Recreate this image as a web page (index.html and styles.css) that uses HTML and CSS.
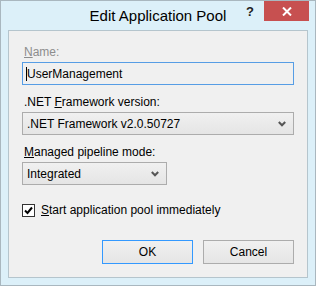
FILE: index.html
```html
<!DOCTYPE html>
<html lang="en">
<head>
    <meta charset="UTF-8">
    <title>Edit Application Pool</title>
    <link rel="stylesheet" href="styles.css">
</head>
<body>
    <div class="window">
        <div class="title-bar">
            <span class="title">Edit Application Pool</span>
            <span class="help-btn">?</span>
            <span class="close-btn">
                <svg width="10" height="9" viewBox="0 0 10 9"><path d="M1 0.5 L9 8.5 M9 0.5 L1 8.5" stroke="#fff" stroke-width="2"/></svg>
            </span>
        </div>
        <div class="panel">
            <label class="field-label disabled"><u>N</u>ame:</label>
            <div class="text-box"><span class="caret"></span>UserManagement</div>

            <label class="field-label">.NET <u>F</u>ramework version:</label>
            <div class="combo wide">
                <span>.NET Framework v2.0.50727</span>
                <svg class="chevron" width="8" height="6" viewBox="0 0 8 6"><path d="M0.8 1 L4 4.3 L7.2 1" fill="none" stroke="#555" stroke-width="2"/></svg>
            </div>

            <label class="field-label"><u>M</u>anaged pipeline mode:</label>
            <div class="combo narrow">
                <span>Integrated</span>
                <svg class="chevron" width="8" height="6" viewBox="0 0 8 6"><path d="M0.8 1 L4 4.3 L7.2 1" fill="none" stroke="#555" stroke-width="2"/></svg>
            </div>

            <div class="check-row">
                <span class="check-box">
                    <svg width="11" height="11" viewBox="0 0 11 11"><path d="M2 5.5 L4.5 8 L9 2.5" fill="none" stroke="#000" stroke-width="2"/></svg>
                </span>
                <span><u>S</u>tart application pool immediately</span>
            </div>

            <div class="button-row">
                <button class="btn default">OK</button>
                <button class="btn">Cancel</button>
            </div>
        </div>
    </div>
</body>
</html>
```

FILE: styles.css
```css
body {
    margin: 0;
    font-family: "Liberation Sans", Arial, sans-serif;
    font-size: 12px;
    color: #000;
}
.window {
    width: 316px;
    height: 286px;
    box-sizing: border-box;
    border: 1px solid #a9b7bf;
    background: #dcf0f9;
    display: flex;
    flex-direction: column;
}
.title-bar {
    height: 29px;
    display: flex;
    align-items: flex-start;
    justify-content: center;
    position: relative;
}
.title {
    font-size: 15px;
    margin-top: 6px;
}
.help-btn {
    position: absolute;
    left: 245px;
    top: 3px;
    font-weight: bold;
    font-size: 13px;
    color: #222;
}
.close-btn {
    position: absolute;
    left: 263px;
    top: 0;
    width: 45px;
    height: 20px;
    background: #c75050;
    display: flex;
    align-items: center;
    justify-content: center;
}
.panel {
    flex: 1;
    margin: 0 7px 7px 7px;
    border: 1px solid #b5c5cd;
    background: #f0f0f0;
    display: flex;
    flex-direction: column;
    padding: 14px 13px 0 13px;
}
.field-label {
    line-height: 15px;
    margin-bottom: 2px;
    padding-left: 2px;
}
.field-label.disabled {
    color: #8d8d8d;
}
.text-box {
    height: 21px;
    border: 1px solid #569de5;
    background: #f0f0f0;
    display: flex;
    align-items: center;
    padding-left: 3px;
    margin-bottom: 10px;
}
.caret {
    width: 1px;
    height: 14px;
    background: #000;
}
.combo {
    height: 21px;
    border: 1px solid #acacac;
    background: linear-gradient(#f0f0f0, #e5e5e5);
    display: flex;
    align-items: center;
    justify-content: space-between;
    padding: 0 7px 0 4px;
    margin-bottom: 10px;
}
.combo.narrow {
    width: 132px;
    margin-bottom: 18px;
}
.check-row {
    display: flex;
    align-items: center;
    gap: 6px;
}
.check-box {
    width: 11px;
    height: 11px;
    border: 1px solid #333;
    background: #fff;
    display: flex;
}
.button-row {
    display: flex;
    justify-content: flex-end;
    gap: 10px;
    margin-top: 23px;
}
.btn {
    width: 91px;
    height: 24px;
    border: 1px solid #acacac;
    background: linear-gradient(#f0f0f0, #e5e5e5);
    font-family: inherit;
    font-size: 12px;
    color: #000;
    padding: 0;
}
.btn.default {
    border-color: #3399ff;
}
```
